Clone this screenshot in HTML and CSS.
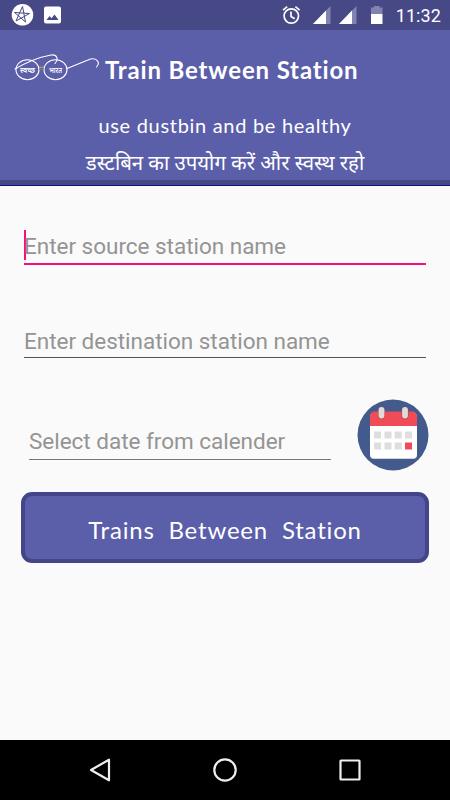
FILE: index.html
```html
<!DOCTYPE html>
<html lang="en">
<head>
<meta charset="utf-8">
<title>Train Between Station</title>
<link rel="stylesheet" href="styles.css">
</head>
<body>
<div class="status">
  <svg class="status-icons" width="66" height="30" viewBox="0 0 66 30">
    <circle cx="22.500" cy="14.800" r="10.800" fill="#fff"/>
    <path d="M22.500 6.500L25.500 22L14.500 12.500L29.500 13.500L16 21Z" fill="none" stroke="#474886" stroke-width="1"/>
    <path fill-rule="evenodd" fill="#fff" d="M46 6.500h13a2 2 0 0 1 2 2v13a2 2 0 0 1-2 2H46a2 2 0 0 1-2-2v-13a2 2 0 0 1 2-2ZM46.500 20h12l-4-5.500-3 3.800-2-2.300Z"/>
  </svg>
  <div class="status-right">
    <svg width="104" height="30" viewBox="280 0 104 30">
      <g fill="none" stroke="#fff" stroke-width="1.700">
        <circle cx="291.300" cy="16" r="7.200"/>
        <path d="M291 11.500v5l3.700 2.300M283 10.200l4.200-3.500M299.600 10.200l-4.200-3.500"/>
      </g>
      <path d="M313 24L330.500 6V24Z" fill="#8283b0"/>
      <path d="M313 24L326 10.600V24Z" fill="#fff"/>
      <path d="M339 24L356.500 6V24Z" fill="#8283b0"/>
      <path d="M339 24L352 10.600V24Z" fill="#fff"/>
      <path d="M371 7.500h3V6h5.500v1.500h3V14H371Z" fill="#8283b0"/>
      <path d="M371 14h11.500v10H371Z" fill="#fff"/>
    </svg>
    <span class="clock">11:32</span>
  </div>
</div>
<header class="header">
  <div class="brand">
    <svg class="logo" width="91" height="40" viewBox="0 0 91 40">
      <g fill="none" stroke="#fff" stroke-width="1.100" stroke-linecap="round">
        <ellipse cx="19.500" cy="19.700" rx="11.500" ry="10"/>
        <ellipse cx="47.500" cy="19.700" rx="11.500" ry="10"/>
        <path d="M7 19C19 12 32 7 43 5C49 4 51 9 47 13.500M59 18.500L80 10C88 6.500 93 12 88.500 17"/>
      </g>
      <path d="M31 17.300h5" stroke="#d98b62" stroke-width="1.200"/>
      <path d="M31 19.200h5" stroke="#41a07c" stroke-width="1.200"/>
      <text x="12" y="22.500" textLength="15" lengthAdjust="spacingAndGlyphs">स्वच्छ</text>
      <text x="41" y="22.500" textLength="13" lengthAdjust="spacingAndGlyphs">भारत</text>
    </svg>
    <h1 class="title">Train Between Station</h1>
  </div>
  <p class="slogan">use dustbin and be healthy</p>
  <p class="slogan-hi" lang="hi">डस्टबिन का उपयोग करें और स्वस्थ रहो</p>
</header>
<main class="form">
  <div class="field source"><span class="caret"></span><span class="hint">Enter source station name</span></div>
  <div class="field dest"><span class="hint">Enter destination station name</span></div>
  <div class="date-row">
    <div class="field date"><span class="hint">Select date from calender</span></div>
    <svg width="72" height="72" viewBox="0 0 72 72">
      <circle cx="36" cy="36" r="35.500" fill="#425b8c"/>
      <rect x="13" y="14" width="47" height="46" rx="4" fill="#d0d2d6"/>
      <path d="M13 27h47v28a4 4 0 0 1-4 4H17a4 4 0 0 1-4-4Z" fill="#fff"/>
      <path d="M13 27V17a4.500 4.500 0 0 1 4.500-4.500h38A4.500 4.500 0 0 1 60 17v10Z" fill="#f04c57"/>
      <path d="M24.500 11.500v5M48 11.500v5" stroke="#c43f49" stroke-width="7" stroke-linecap="round"/>
      <path d="M24.500 11v5.500M48 11v5.500" stroke="#dcdcdc" stroke-width="5.800" stroke-linecap="round"/>
      <path d="M17 32.500h7v7h-7zM27.500 32.500h7v7h-7zM37.700 32.500h7v7h-7zM48 32.500h7v7h-7zM17 43.500h7v7h-7zM27.500 43.500h7v7h-7zM37.700 43.500h7v7h-7z" fill="#dedede"/>
      <path d="M48 43.500h7v7h-7z" fill="#f04c57"/>
    </svg>
  </div>
  <button class="submit"><span>Trains&nbsp; Between&nbsp; Station</span></button>
</main>
<nav class="nav">
  <svg width="450" height="60" viewBox="0 0 450 60" fill="none" stroke="#eee" stroke-width="2.200" stroke-linejoin="round">
    <path d="M91 30L109 19.700V40.300Z"/>
    <circle cx="225" cy="30" r="10.700"/>
    <rect x="340.500" y="20.500" width="19" height="19" rx=".5"/>
  </svg>
</nav>
</body>
</html>
```
FILE: styles.css
```css
* { box-sizing: border-box; }
body {
  margin: 0;
  width: 450px;
  height: 800px;
  display: flex;
  flex-direction: column;
  background: #fafafa;
  font-family: Roboto, sans-serif;
  overflow: hidden;
}
svg { display: block; flex: none; }
.status {
  height: 30px;
  display: flex;
  justify-content: space-between;
  background: #474886;
}
.status-right { display: flex; padding-right: 9px; gap: 12px; }
.clock { color: #fff; font-size: 18px; line-height: 32px; letter-spacing: .1px; }
.header {
  height: 156px;
  background: #5b5ea9;
  border-bottom: 1px solid #10107a;
  box-shadow: inset 0 -5px #474886;
  color: #fff;
  font-family: Lato, "Noto Sans", sans-serif;
  text-align: center;
}
.brand { display: flex; height: 80px; padding: 20px 0 0 8px; }
.logo text { fill: #fff; font: 600 8px "Noto Sans", sans-serif; }
.title { margin: 0 0 0 6px; font-size: 24px; line-height: 39px; font-weight: 700; letter-spacing: .85px; white-space: nowrap; }
.slogan { margin: 0; font-size: 20px; line-height: 30px; letter-spacing: .7px; }
.slogan-hi { margin: 7px 0 0; font-size: 20.400px; line-height: 30px; white-space: nowrap; }
.form { flex: 1; padding: 44px 21px 0; }
.field { display: flex; align-items: center; color: #949494; font-size: 22.500px; white-space: nowrap; }
.source { height: 35px; margin: 0 3px; border-bottom: 2px solid #f50f76; padding-bottom: 3px; }
.source .hint { padding-top: 2px; }
.caret { width: 2px; height: 30px; background: #f50f76; margin-right: -2px; }
.dest { height: 34px; margin: 59px 3px 0; border-bottom: 1px solid #555; }
.date-row { display: flex; justify-content: space-between; margin-top: 41px; padding-left: 8px; }
.date { width: 302px; height: 37px; margin-top: 24px; border-bottom: 1px solid #777; }
.submit {
  display: flex;
  align-items: center;
  justify-content: center;
  width: 408px;
  height: 71px;
  margin: 21px 0 0;
  padding: 3px 0 0;
  border: 4px solid #444589;
  border-radius: 11px;
  background: #5b5ea9;
  color: #fff;
  font: 400 24px Lato, sans-serif;
  letter-spacing: .8px;
}
.hint { letter-spacing: -.02px; }
.nav { height: 60px; background: #000; }
```
